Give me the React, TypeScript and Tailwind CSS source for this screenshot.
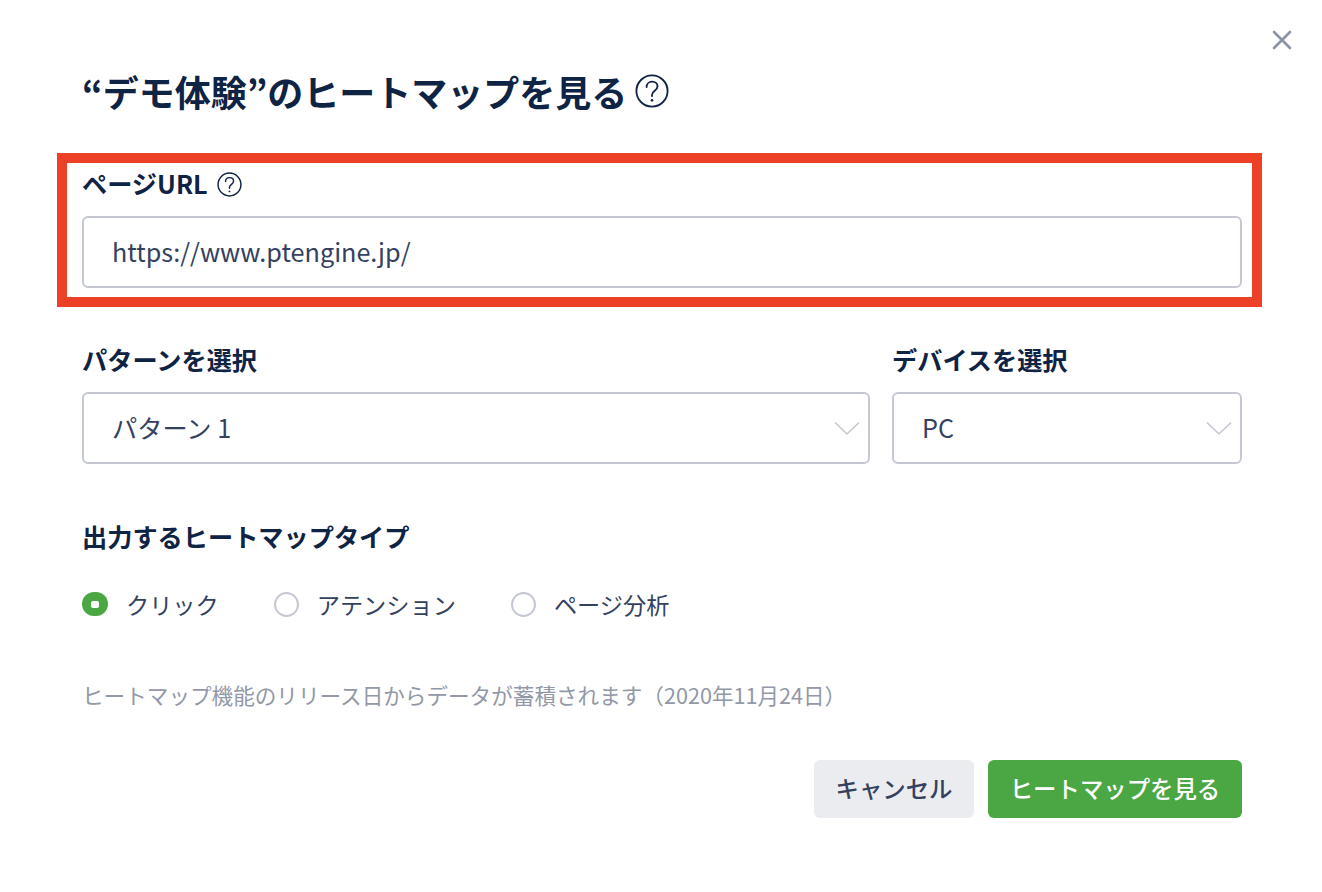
import React from "react";

function Help({ size, sw }: { size: number; sw: number }) {
  return (
    <svg width={size} height={size} viewBox="0 0 24 24" fill="none" stroke="#0f2344" strokeWidth={sw} className="shrink-0">
      <circle cx="12" cy="12" r="11" />
      <path d="M8.2 9.2c0-2.3 1.7-3.8 3.9-3.8 2.2 0 3.8 1.4 3.8 3.3 0 1.6-.9 2.4-2 3.2-1.1.8-1.9 1.5-1.9 3v.6" strokeLinecap="round" />
      <circle cx="12" cy="18.6" r="0.9" fill="#0f2344" stroke="none" />
    </svg>
  );
}

function Chevron() {
  return (
    <svg width="26" height="15" viewBox="0 0 26 15" fill="none" stroke="#c5c8d3" strokeWidth="1.6" className="absolute right-[8px] top-[27px]">
      <path d="M1 1.5 13 13 25 1.5" />
    </svg>
  );
}

function Select({ value, className }: { value: string; className: string }) {
  return (
    <div className={`relative h-[72px] flex items-center rounded-md border-2 border-[#c5c8d3] pl-[28px] text-[25.2px] text-[#33415f] ${className}`}>
      {value}
      <Chevron />
    </div>
  );
}

function Radio({ label, checked }: { label: string; checked?: boolean }) {
  return (
    <div className="flex items-center gap-[18px]">
      {checked ? (
        <span className="w-[26px] h-[24px] rounded-full bg-[#4ba644] flex items-center justify-center">
          <span className="w-[8px] h-[7px] rounded-[2px] bg-white" />
        </span>
      ) : (
        <span className="w-[25px] h-[25px] rounded-full border-2 border-[#c5c8d3] bg-white" />
      )}
      <span className="text-[23.2px] leading-[36px] text-[#33415f]">{label}</span>
    </div>
  );
}

export default function App() {
  return (
    <div
      className="relative w-[1322px] h-[892px] bg-white overflow-hidden pl-[82px] pr-[80px] pt-[65px]"
      style={{ fontFamily: '"Noto Sans CJK JP", "Noto Sans", sans-serif' }}
    >
      <button className="absolute right-[30px] top-[30px] w-[20px] h-[20px]">
        <svg width="20" height="20" viewBox="0 0 20 20" fill="none" stroke="#8b93a7" strokeWidth="2.6" strokeLinecap="round">
          <path d="M2 2 18 18M18 2 2 18" />
        </svg>
      </button>

      <div className="flex items-center gap-[8px] h-[52px]">
        <h1 className="text-[36px] leading-[52px] font-bold text-[#0f2344]">“デモ体験”のヒートマップを見る</h1>
        <Help size={34} sw={1.3} />
      </div>

      <div className="mt-[49px] flex items-center gap-[9px] h-[36px] text-[25.2px] font-bold text-[#0f2344]">
        <span>ページURL</span>
        <Help size={25} sw={1.4} />
      </div>
      <div className="mt-[14px] h-[72px] flex items-center rounded-md border-2 border-[#c5c8d3] pl-[28px] text-[25.2px] text-[#33415f]">
        https://www.ptengine.jp/
      </div>

      <div className="mt-[53px] flex gap-[22px]">
        <div className="w-[788px]">
          <div className="h-[36px] leading-[36px] text-[25.2px] font-bold text-[#0f2344]">パターンを選択</div>
          <Select value="パターン 1" className="mt-[15px]" />
        </div>
        <div className="flex-1">
          <div className="h-[36px] leading-[36px] text-[25.2px] font-bold text-[#0f2344]">デバイスを選択</div>
          <Select value="PC" className="mt-[15px]" />
        </div>
      </div>

      <div className="mt-[54px] h-[36px] leading-[36px] text-[25.2px] font-bold text-[#0f2344]">出力するヒートマップタイプ</div>

      <div className="mt-[32px] flex gap-[55px]">
        <Radio label="クリック" checked />
        <Radio label="アテンション" />
        <Radio label="ページ分析" />
      </div>

      <p className="mt-[55px] h-[36px] leading-[36px] text-[21.6px] text-[#9298a8]">ヒートマップ機能のリリース日からデータが蓄積されます（2020年11月24日）</p>

      <div className="mt-[47px] flex justify-end gap-[14px]">
        <button className="w-[160px] h-[58px] rounded-md bg-[#ebecf0] text-[23.4px] font-medium text-[#33415f]">キャンセル</button>
        <button className="w-[254px] h-[58px] rounded-md bg-[#4ba644] text-[23.4px] font-medium text-white">ヒートマップを見る</button>
      </div>

      <div className="absolute left-[57px] top-[153px] w-[1205px] h-[154px] border-[10px] border-[#ec4126] pointer-events-none" />
    </div>
  );
}
